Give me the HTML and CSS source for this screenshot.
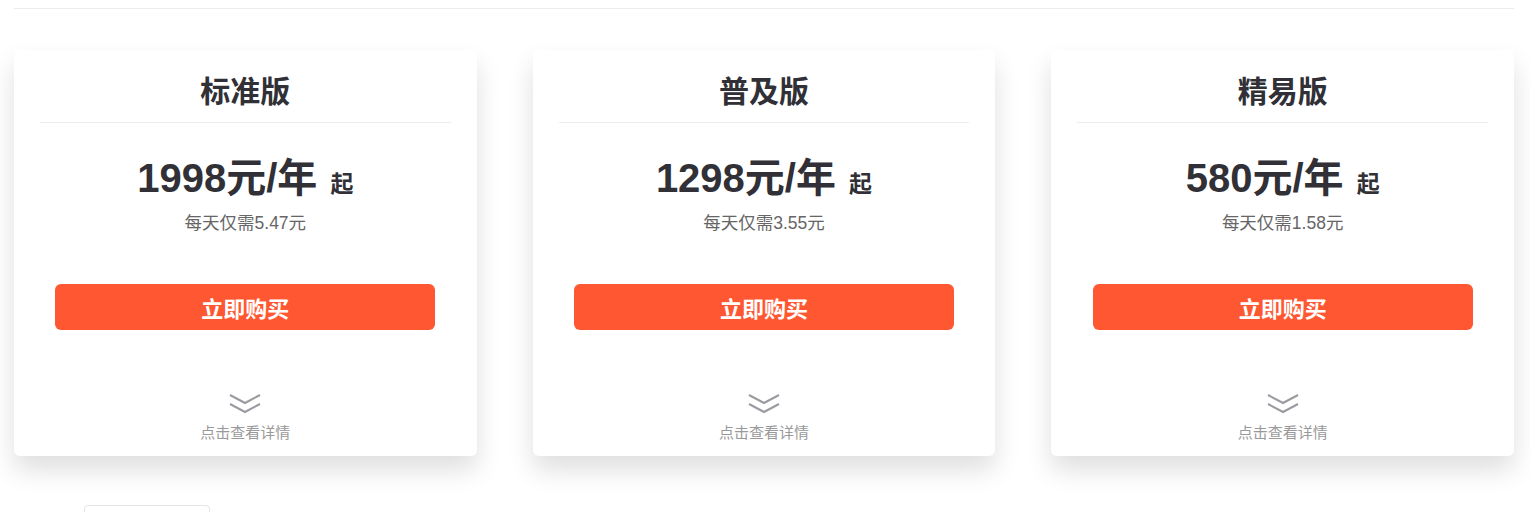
FILE: index.html
```html
<!DOCTYPE html>
<html lang="zh-CN">
<head>
  <meta charset="UTF-8" />
  <meta name="viewport" content="width=device-width, initial-scale=1.0" />
  <title>版本价格</title>
  <link rel="stylesheet" href="styles.css">
</head>
<body>
  <div class="page">
    <div class="plans">
      <div class="plan">
        <h3 class="plan-name">标准版</h3>
        <div class="price">1998元/年 <span class="from">起</span></div>
        <div class="daily">每天仅需5.47元</div>
        <button class="buy">立即购买</button>
        <div class="more">
          <svg class="chevrons" width="32" height="20" viewBox="0 0 32 20"><path d="M1 1 L16 9 L31 1 M1 10 L16 18 L31 10" fill="none" stroke="#9a9aa0" stroke-width="2"/></svg>
          <span>点击查看详情</span>
        </div>
      </div>
      <div class="plan">
        <h3 class="plan-name">普及版</h3>
        <div class="price">1298元/年 <span class="from">起</span></div>
        <div class="daily">每天仅需3.55元</div>
        <button class="buy">立即购买</button>
        <div class="more">
          <svg class="chevrons" width="32" height="20" viewBox="0 0 32 20"><path d="M1 1 L16 9 L31 1 M1 10 L16 18 L31 10" fill="none" stroke="#9a9aa0" stroke-width="2"/></svg>
          <span>点击查看详情</span>
        </div>
      </div>
      <div class="plan">
        <h3 class="plan-name">精易版</h3>
        <div class="price">580元/年 <span class="from">起</span></div>
        <div class="daily">每天仅需1.58元</div>
        <button class="buy">立即购买</button>
        <div class="more">
          <svg class="chevrons" width="32" height="20" viewBox="0 0 32 20"><path d="M1 1 L16 9 L31 1 M1 10 L16 18 L31 10" fill="none" stroke="#9a9aa0" stroke-width="2"/></svg>
          <span>点击查看详情</span>
        </div>
      </div>
    </div>
    <div class="tab-box"></div>
  </div>
</body>
</html>
```

FILE: styles.css
```css
body {
  margin: 0;
  background: #ffffff;
  font-family: "Liberation Sans", "Noto Sans CJK SC", sans-serif;
  color: #303036;
  overflow: hidden;
}

.page {
  width: 1500px;
  margin-left: 14px;
  padding-top: 8px;
}

.plans {
  border-top: 1px solid #ececec;
  padding-top: 41px;
  display: grid;
  grid-template-columns: repeat(3, 1fr);
  gap: 56px;
}

.plan {
  background: #fff;
  border-radius: 6px;
  box-shadow: 0 14px 26px rgba(0, 0, 0, 0.13);
  padding: 22px 26px 13px;
  text-align: center;
}

.plan-name {
  margin: 0;
  font-size: 30px;
  line-height: 40px;
  font-weight: 700;
  padding-bottom: 10px;
  border-bottom: 1px solid #ececec;
}

.price {
  margin-top: 31px;
  font-size: 40px;
  line-height: 48px;
  font-weight: 700;
}

.from {
  font-size: 23px;
  margin-left: 2px;
}

.daily {
  margin-top: 3px;
  font-size: 17.5px;
  line-height: 24px;
  color: #666;
}

.buy {
  display: block;
  width: 380px;
  height: 46px;
  margin: 49px auto 0;
  border: none;
  border-radius: 6px;
  background: #ff5731;
  color: #fff;
  font-family: "Noto Sans CJK SC", sans-serif;
  font-size: 22px;
  font-weight: 700;
}

.more {
  margin-top: 64px;
  display: flex;
  flex-direction: column;
  align-items: center;
  gap: 9px;
  font-size: 15px;
  line-height: 20px;
  color: #999;
}

.tab-box {
  margin: 49px 0 0 70px;
  width: 124px;
  height: 30px;
  border: 1px solid #e6e2e6;
  border-radius: 4px;
}
```
